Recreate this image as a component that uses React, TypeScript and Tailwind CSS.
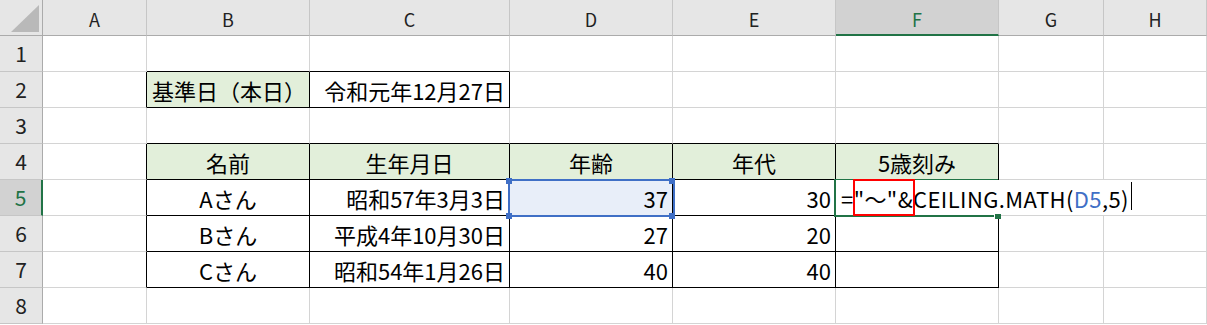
import React from 'react';

type Align = 'left' | 'center' | 'right';
type Cell = { text?: string; align?: Align; fill?: boolean };

const COL_LETTERS = ['A', 'B', 'C', 'D', 'E', 'F', 'G', 'H'];
const ROWS = [1, 2, 3, 4, 5, 6, 7, 8];

// sheet contents, keyed "row,col" (col 0 = A)
const cells: Record<string, Cell> = {
  '2,1': { text: '基準日（本日）', align: 'left', fill: true },
  '2,2': { text: '令和元年12月27日', align: 'right' },

  '4,1': { text: '名前', align: 'center', fill: true },
  '4,2': { text: '生年月日', align: 'center', fill: true },
  '4,3': { text: '年齢', align: 'center', fill: true },
  '4,4': { text: '年代', align: 'center', fill: true },
  '4,5': { text: '5歳刻み', align: 'center', fill: true },

  '5,1': { text: 'Aさん', align: 'center' },
  '5,2': { text: '昭和57年3月3日', align: 'right' },
  '5,3': { text: '37', align: 'right' },
  '5,4': { text: '30', align: 'right' },

  '6,1': { text: 'Bさん', align: 'center' },
  '6,2': { text: '平成4年10月30日', align: 'right' },
  '6,3': { text: '27', align: 'right' },
  '6,4': { text: '20', align: 'right' },

  '7,1': { text: 'Cさん', align: 'center' },
  '7,2': { text: '昭和54年1月26日', align: 'right' },
  '7,3': { text: '40', align: 'right' },
  '7,4': { text: '40', align: 'right' },
};

// cells that carry thin black borders
const boxed = (r: number, c: number) =>
  (r === 2 && (c === 1 || c === 2)) || (r >= 4 && r <= 7 && c >= 1 && c <= 5);

const alignClass = (a?: Align) =>
  a === 'right' ? 'justify-end pr-[4px]' : a === 'center' ? 'justify-center' : 'justify-start pl-[5px]';

function CornerCell() {
  return (
    <div className="flex items-end justify-end pr-[3px] pb-[3px] bg-[#e6e6e6] border-r border-b border-r-[#ababab] border-b-[#ababab]">
      <svg width="28" height="27" viewBox="0 0 28 27">
        <polygon points="0,27 28,27 28,0" fill="#b9b9b9" />
      </svg>
    </div>
  );
}

function ColHeader({ letter }: { letter: string }) {
  const active = letter === 'F';
  return (
    <div
      className={
        active
          ? 'flex items-center justify-center pt-[3px] text-[18px] leading-none bg-[#d2d2d2] text-[#217346] border-r border-b-2 border-r-[#c6c6c6] border-b-[#217346]'
          : 'flex items-center justify-center pt-[3px] text-[18px] leading-none bg-[#e6e6e6] text-[#222] border-r border-b border-r-[#c6c6c6] border-b-[#ababab]'
      }
    >
      {letter}
    </div>
  );
}

function RowHeader({ row }: { row: number }) {
  const active = row === 5;
  return (
    <div
      className={
        active
          ? 'flex items-center justify-center text-[21px] leading-none bg-[#d2d2d2] text-[#217346] border-r-2 border-b border-r-[#217346] border-b-[#c6c6c6]'
          : 'flex items-center justify-center text-[21px] leading-none bg-[#e6e6e6] text-[#222] border-r border-b border-r-[#ababab] border-b-[#c6c6c6]'
      }
    >
      {row}
    </div>
  );
}

// formula being typed into F5, spilling over G5
function FormulaEditor() {
  return (
    <>
      <div className="absolute z-10 -left-[2px] -top-[1px] right-0 -bottom-[2px] border-l-2 border-t-2 border-b-2 border-[#217346]" />
      <div className="absolute z-20 left-[158px] top-[34px] w-[7px] h-[5px] bg-[#217346] border-l border-white" />
      <div className="absolute z-10 left-0 top-0 bottom-0 flex items-center pl-[5px] pr-[3px] bg-white whitespace-nowrap text-[22px] leading-none tracking-[0.4px]">
        <span>=</span>
        <span className="relative self-stretch flex items-center">
          <span>"～"&amp;</span>
          <span className="absolute -left-[1px] -right-[2px] -top-[1px] -bottom-[1px] border-2 border-[#ff0000]" />
        </span>
        <span>CEILING.MATH(</span>
        <span className="text-[#3f6fc6]">D5</span>
        <span>,5)</span>
        <span className="ml-[2px] self-stretch mt-[2px] mb-[5px] w-px bg-black" />
      </div>
    </>
  );
}

// D5 is highlighted as the reference used by the formula
function ReferenceBox() {
  return (
    <>
      <div className="absolute z-10 -left-[2px] -top-[1px] -right-[3px] -bottom-[2px] border-2 border-[#3f6fc6]" />
      <div className="absolute z-10 -left-[4px] -top-[2px] w-[6px] h-[6px] bg-[#3f6fc6]" />
      <div className="absolute z-10 -right-[3px] -top-[2px] w-[6px] h-[6px] bg-[#3f6fc6]" />
      <div className="absolute z-10 -left-[4px] -bottom-[4px] w-[6px] h-[6px] bg-[#3f6fc6]" />
      <div className="absolute z-10 -right-[3px] -bottom-[4px] w-[6px] h-[6px] bg-[#3f6fc6]" />
    </>
  );
}

function SheetCell({ r, c }: { r: number; c: number }) {
  const cell = cells[`${r},${c}`];
  const right = boxed(r, c) || boxed(r, c + 1) ? 'border-r-black' : 'border-r-[#d4d4d4]';
  const bottom = boxed(r, c) || boxed(r + 1, c) ? 'border-b-black' : 'border-b-[#d4d4d4]';
  const isRef = r === 5 && c === 3;
  const isEdit = r === 5 && c === 5;
  const bg = isRef ? 'bg-[#e8eef9]' : cell?.fill ? 'bg-[#e2efda]' : 'bg-white';

  return (
    <div
      className={`relative flex items-center border-r border-b text-[22px] leading-none whitespace-nowrap ${right} ${bottom} ${bg} ${alignClass(cell?.align)}`}
    >
      {cell?.text}
      {isRef && <ReferenceBox />}
      {isEdit && <FormulaEditor />}
    </div>
  );
}

export default function App() {
  return (
    <div className="w-[1207px] h-[325px] overflow-hidden bg-white text-black font-['Noto_Sans_CJK_JP','Noto_Sans',sans-serif]">
      <div className="grid grid-cols-[43px_104px_163px_200px_163px_163px_163px_105px_103px] grid-rows-[repeat(9,36px)]">
        <CornerCell />
        {COL_LETTERS.map((l) => (
          <ColHeader key={l} letter={l} />
        ))}
        {ROWS.map((r) => (
          <React.Fragment key={r}>
            <RowHeader row={r} />
            {COL_LETTERS.map((_, c) => (
              <SheetCell key={c} r={r} c={c} />
            ))}
          </React.Fragment>
        ))}
      </div>
    </div>
  );
}
